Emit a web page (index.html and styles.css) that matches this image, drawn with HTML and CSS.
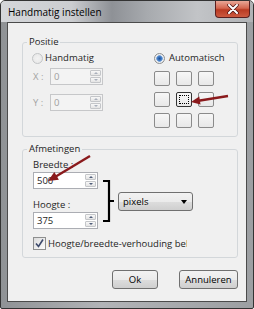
FILE: index.html
```html
<!DOCTYPE html>
<html lang="nl">
<head>
    <meta charset="UTF-8">
    <meta name="viewport" content="width=device-width, initial-scale=1.0">
    <title>Handmatig instellen</title>
    <link rel="stylesheet" href="styles.css">
</head>
<body>
    <div class="window">
        <div class="titlebar">
            <span class="title">Handmatig instellen</span>
            <span class="close">
                <svg width="12" height="10" viewBox="0 0 12 10">
                    <path d="M2 1 L10 9 M10 1 L2 9" stroke="#4a1010" stroke-width="3.4" stroke-linecap="round"/>
                    <path d="M2 1 L10 9 M10 1 L2 9" stroke="#fff" stroke-width="2" stroke-linecap="round"/>
                </svg>
            </span>
        </div>

        <div class="client">
            <fieldset class="group group-pos">
                <legend>Positie</legend>
                <div class="pos-body">
                    <div class="pos-manual">
                        <div class="radio disabled"><span class="radio-dot"></span>Handmatig</div>
                        <div class="coord">
                            <span class="coord-label">X :</span>
                            <div class="spin disabled">
                                <span class="spin-val">0</span>
                                <span class="spin-btns"><span class="spin-btn up"></span><span class="spin-btn down"></span></span>
                            </div>
                        </div>
                        <div class="coord">
                            <span class="coord-label">Y :</span>
                            <div class="spin disabled">
                                <span class="spin-val">0</span>
                                <span class="spin-btns"><span class="spin-btn up"></span><span class="spin-btn down"></span></span>
                            </div>
                        </div>
                    </div>
                    <div class="pos-auto">
                        <div class="radio"><span class="radio-dot checked"></span>Automatisch</div>
                        <div class="anchor-grid">
                            <span class="anchor"></span>
                            <span class="anchor"></span>
                            <span class="anchor"></span>
                            <span class="anchor"></span>
                            <span class="anchor active"></span>
                            <span class="anchor"></span>
                            <span class="anchor"></span>
                            <span class="anchor"></span>
                            <span class="anchor"></span>
                        </div>
                    </div>
                </div>
            </fieldset>

            <fieldset class="group group-size">
                <legend>Afmetingen</legend>
                <div class="size-body">
                    <div class="size-fields">
                        <div class="field-label">Breedte :</div>
                        <div class="spin wide">
                            <span class="spin-val">500</span>
                            <span class="spin-btns"><span class="spin-btn up"></span><span class="spin-btn down"></span></span>
                        </div>
                        <div class="field-label second">Hoogte :</div>
                        <div class="spin wide">
                            <span class="spin-val">375</span>
                            <span class="spin-btns"><span class="spin-btn up"></span><span class="spin-btn down"></span></span>
                        </div>
                    </div>
                    <svg class="bracket" width="11" height="43" viewBox="0 0 11 43">
                        <path d="M0 1 H6 V41 H0 M6 21 H11" fill="none" stroke="#000" stroke-width="2.2"/>
                    </svg>
                    <div class="select">
                        <span>pixels</span>
                        <span class="select-arrow"></span>
                    </div>
                </div>
                <div class="check">
                    <span class="check-box">
                        <svg width="11" height="11" viewBox="0 0 11 11">
                            <path d="M2 5.5 L4.5 8.5 L9 1.5" fill="none" stroke="#3d4a6c" stroke-width="1.6"/>
                        </svg>
                    </span>
                    <span class="check-text">Hoogte/breedte-verhouding behouden</span>
                </div>
            </fieldset>

            <div class="buttons">
                <button class="btn-ok">Ok</button>
                <button class="btn-cancel">Annuleren</button>
            </div>
        </div>

        <!-- red annotation arrows on top of the dialog -->
        <svg class="annotations" width="254" height="309" viewBox="0 0 254 309">
            <line x1="227" y1="95" x2="196" y2="100" stroke="#8a1a1c" stroke-width="2.4"/>
            <polygon points="190,101 199.5,103.5 198.3,95.6" fill="#8a1a1c"/>
            <line x1="89" y1="155" x2="54" y2="176" stroke="#8a1a1c" stroke-width="2.4"/>
            <polygon points="47,180 57.9,178.8 53.3,171" fill="#8a1a1c"/>
        </svg>
    </div>
</body>
</html>
```

FILE: styles.css
```css
body {
    margin: 0;
    font-family: "Open Sans", "Noto Sans", sans-serif;
    font-size: 9.5px;
    color: #1e1e1e;
}

.window {
    position: relative;
    width: 254px;
    height: 309px;
    box-sizing: border-box;
    border: 1px solid #333;
    border-radius: 5px 5px 2px 2px;
    background: linear-gradient(to right, #8f9295, #b2b4b7 40%, #9c9fa2);
    overflow: hidden;
}

.titlebar {
    height: 21px;
    display: flex;
    align-items: flex-start;
    background: linear-gradient(90deg, #d5d7da 0%, #cbcdd0 28%, #8e9196 44%, #a7aaae 58%, #c2c4c7 78%, #b0b2b5 100%);
}

.title {
    padding: 5px 0 0 7px;
    font-size: 10px;
    line-height: 12px;
    color: #000;
}

.close {
    margin-left: auto;
    margin-right: 3px;
    width: 35px;
    height: 17px;
    box-sizing: border-box;
    border: 1px solid #5a1f1f;
    border-top: none;
    border-radius: 0 0 4px 4px;
    background: linear-gradient(#e9a797, #d4664f 45%, #b93a22 55%, #cc5a40);
    display: flex;
    align-items: center;
    justify-content: center;
}

.client {
    margin: 0 6px;
    height: 280px;
    box-sizing: border-box;
    border: 1px solid #4b4b4b;
    background: #f0f0f0;
    padding: 13px 8px 0 14px;
}

.group {
    margin: 0;
    padding: 0;
    min-width: 0;
    box-sizing: border-box;
    border: 1px solid #d3d7da;
    border-radius: 3px;
}

.group legend {
    margin-left: 4px;
    padding: 0 2px;
    line-height: 12px;
    color: #1e1e1e;
}

.group-pos {
    height: 101px;
}

.group-size {
    height: 115px;
    margin-top: 6px;
}

/* Positie */
.pos-body {
    display: flex;
    padding: 4px 0 0 9px;
}

.pos-manual {
    width: 122px;
}

.radio {
    display: flex;
    align-items: center;
    gap: 2px;
    height: 12px;
    line-height: 12px;
}

.radio.disabled {
    color: #1e1e1e;
}

.radio-dot {
    width: 11px;
    height: 11px;
    box-sizing: border-box;
    border-radius: 50%;
    border: 1px solid #a9abad;
    background: radial-gradient(circle, #f4f4f4 0, #e2e2e2 100%);
}

.radio.disabled .radio-dot {
    border-color: #c2c4c6;
    background: radial-gradient(circle, #f2f2f2 0, #e6e6e6 100%);
}

.radio-dot.checked {
    border-color: #8e8f8f;
    background: radial-gradient(circle, #1d4f93 0, #3c78c4 2px, #7da6d8 3px, #eef1f5 3.6px, #dcdcdc 100%);
}

.coord {
    display: flex;
    align-items: center;
    margin-top: 4px;
}

.coord + .coord {
    margin-top: 9px;
}

.coord-label {
    width: 17px;
    padding-left: 1px;
    color: #a3a3a3;
}

.spin {
    width: 53px;
    height: 17px;
    box-sizing: border-box;
    border: 1px solid #abadb3;
    background: #fff;
    display: flex;
}

.spin.disabled {
    border-color: #c6c7c9;
    background: #f3f3f3;
    color: #a0a0a0;
}

.spin.wide {
    width: 65px;
    margin-top: 1px;
}

.spin-val {
    flex: 1;
    padding-left: 3px;
    line-height: 15px;
}

.spin-btns {
    width: 11px;
    padding: 1px 1px 1px 0;
    display: flex;
    flex-direction: column;
    gap: 1px;
}

.spin-btn {
    flex: 1;
    border: 1px solid #c4c6c9;
    border-radius: 1px;
    background: linear-gradient(#f8f8f8, #e4e4e4);
    display: flex;
    align-items: center;
    justify-content: center;
}

.spin-btn::before {
    content: "";
    border-left: 2px solid transparent;
    border-right: 2px solid transparent;
}

.spin-btn.up::before {
    border-bottom: 2px solid #4f5d7a;
}

.spin-btn.down::before {
    border-top: 2px solid #4f5d7a;
}

.spin.disabled .spin-btn.up::before {
    border-bottom-color: #a9b0bc;
}

.spin.disabled .spin-btn.down::before {
    border-top-color: #a9b0bc;
}

.pos-auto .radio {
    gap: 4px;
}

.anchor-grid {
    display: grid;
    grid-template-columns: repeat(3, 16px);
    grid-auto-rows: 15px;
    gap: 6px;
    margin-top: 7px;
}

.anchor {
    box-sizing: border-box;
    border: 1px solid #8b8b8b;
    border-radius: 2px;
    background: linear-gradient(#f7f7f7, #e8e8e8);
}

.anchor.active {
    border-color: #333;
    outline: 1px dotted #000;
    outline-offset: -4px;
}

/* Afmetingen */
.size-body {
    display: flex;
    align-items: flex-start;
    padding: 4px 0 0 10px;
}

.size-fields {
    width: 65px;
}

.field-label {
    height: 12px;
    line-height: 12px;
}

.field-label.second {
    margin-top: 10px;
}

.bracket {
    margin: 21px 0 0 5px;
}

.select {
    width: 75px;
    height: 19px;
    margin: 33px 0 0 4px;
    box-sizing: border-box;
    border: 1px solid #707070;
    border-radius: 3px;
    background: linear-gradient(#f2f2f2 0%, #ebebeb 50%, #dddddd 51%, #cfcfcf 100%);
    display: flex;
    align-items: center;
    justify-content: space-between;
    padding: 0 5px 0 4px;
    color: #000;
}

.select-arrow {
    border-left: 3.5px solid transparent;
    border-right: 3.5px solid transparent;
    border-top: 4px solid #000;
}

.check {
    display: flex;
    align-items: center;
    gap: 2px;
    height: 13px;
    margin: 8px 0 0 10px;
}

.check-box {
    width: 13px;
    height: 13px;
    box-sizing: border-box;
    border: 1px solid #8e8f8f;
    background: linear-gradient(135deg, #dcdcdc, #fcfcfc);
    display: flex;
    align-items: center;
    justify-content: center;
}

.check-text {
    width: 139px;
    overflow: hidden;
    white-space: nowrap;
}

.buttons {
    display: flex;
    justify-content: flex-end;
    gap: 21px;
    margin-top: 12px;
}

.buttons button {
    height: 19px;
    padding: 0;
    font-family: inherit;
    font-size: 9.5px;
    color: #000;
    border: 1px solid #707070;
    border-radius: 3px;
    background: linear-gradient(#f2f2f2 0%, #ebebeb 50%, #dddddd 51%, #cfcfcf 100%);
}

.btn-ok {
    width: 46px;
}

.btn-cancel {
    width: 59px;
}

.annotations {
    position: absolute;
    left: 0;
    top: 0;
    pointer-events: none;
}
```
